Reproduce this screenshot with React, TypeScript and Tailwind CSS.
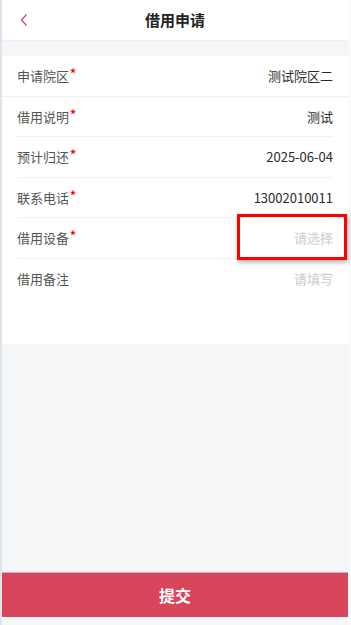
import React from 'react';

const rows = [
  { label: '申请院区', required: true, value: '测试院区二' },
  { label: '借用说明', required: true, value: '测试' },
  { label: '预计归还', required: true, value: '2025-06-04' },
  { label: '联系电话', required: true, value: '13002010011' },
  { label: '借用设备', required: true, value: '', placeholder: '请选择', highlight: true },
  { label: '借用备注', required: false, value: '', placeholder: '请填写' },
];

export default function App() {
  return (
    <div
      className="flex h-[625px] w-[351px] overflow-hidden bg-[#f9fafc]"
      style={{ fontFamily: '"Noto Sans CJK SC", "Noto Sans", sans-serif' }}
    >
      <div className="w-[2px] shrink-0 bg-[#dfe4ec]" />
      <div className="flex w-[346px] shrink-0 flex-col bg-[#f5f6f8]">
        {/* Header */}
        <div className="flex h-[41px] items-center border-b border-[#eceef1] bg-white px-[17px]">
          <svg width="10" height="14" viewBox="0 0 10 14" className="shrink-0">
            <path d="M7.5 1.5 L2.5 7 L7.5 12.5" fill="none" stroke="#e0485e" strokeWidth="1.4" />
          </svg>
          <div className="flex-1 pr-[10px] text-center text-[15px] font-bold text-[#222]">借用申请</div>
        </div>

        {/* Form card */}
        <div className="mt-[15px] h-[288px] bg-white">
          {rows.map((r, i) => (
            <div
              key={r.label}
              className={`relative flex h-[40.5px] items-center justify-between ${
                i === 0 ? 'border-b border-[#eef0f2] pl-[15px] pr-[15px]' : 'ml-[15px] mr-[15px]'
              } ${i > 0 && i < rows.length - 1 ? 'border-b border-[#f0f1f3]' : ''}`}
            >
              <div className="flex items-start text-[13px] text-[#555]">
                <span>{r.label}</span>
                {r.required && <span className="ml-[1px] mt-[-2px] text-[12px] font-bold leading-[18px] text-[#f00]">*</span>}
              </div>
              {r.value ? (
                <span className="text-[13px] text-[#2a2a2a]">{r.value}</span>
              ) : (
                <span className="text-[13px] font-medium text-[#d2d2d2]">{r.placeholder}</span>
              )}
              {r.highlight && (
                <div className="absolute right-[-14px] top-[-4px] h-[46px] w-[110px] border-[3px] border-[#ff0000] shadow-[1px_2px_5px_rgba(0,0,0,0.35)]" />
              )}
            </div>
          ))}
        </div>

        <div className="flex-1" />

        {/* Submit */}
        <div className="mb-[8px] flex h-[45px] items-center justify-center border-t border-[#b8bcc2] bg-[#d9455a] text-[16px] font-bold text-white">
          提交
        </div>
      </div>
      <div className="flex-1 bg-[#f9fafc]" />
    </div>
  );
}
